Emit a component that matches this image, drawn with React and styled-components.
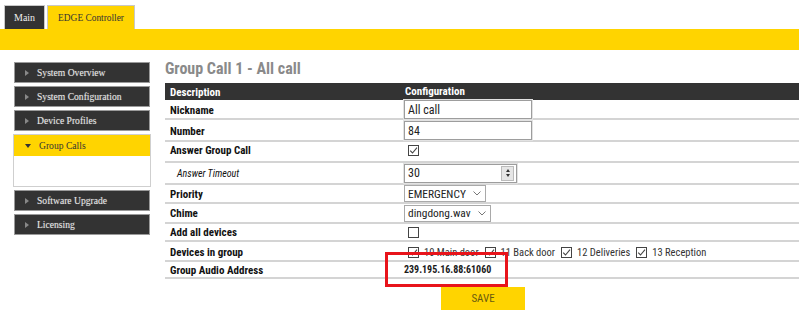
import React from 'react';
import styled, { createGlobalStyle } from 'styled-components';

const Global = createGlobalStyle`
  html, body { margin: 0; padding: 0; background: #fff; overflow: hidden; }
  body { width: 799px; height: 318px; }
`;

const COND = `"Roboto Condensed", "Liberation Sans Narrow", "DejaVu Sans Condensed", Roboto, sans-serif`;
const YELLOW = '#FFD400';

const Page = styled.div`
  width: 799px;
  height: 318px;
  overflow: hidden;
`;

const TabBar = styled.div`
  display: flex;
  gap: 2px;
  padding: 5px 0 0 4px;
  height: 24px;
`;

const Tab = styled.div`
  height: 24px;
  box-sizing: border-box;
  padding: 0 ${p => (p.$active ? 10 : 9)}px;
  display: flex;
  align-items: center;
  font-family: "Liberation Serif", serif;
  font-size: ${p => (p.$active ? 9.4 : 10)}px;
  background: ${p => (p.$active ? YELLOW : '#333')};
  color: ${p => (p.$active ? '#333' : '#eee')};
  border: 1px solid #c8c8c8;
  border-bottom: none;
`;

const Band = styled.div`
  height: 21px;
  background: ${YELLOW};
`;

const Body = styled.div`
  display: flex;
`;

const Sidebar = styled.nav`
  margin: 12px 0 0 14px;
  width: 136px;
  flex-shrink: 0;
  display: flex;
  flex-direction: column;
  gap: 3px;
`;

const NavItem = styled.div`
  height: 21px;
  box-sizing: border-box;
  background: ${p => (p.$open ? YELLOW : '#333')};
  border: 1px solid ${p => (p.$open ? YELLOW : '#9a9a9a')};
  display: flex;
  align-items: center;
  gap: 5px;
  padding-left: 10px;
  font-family: "Liberation Serif", serif;
  font-size: 9.6px;
  color: ${p => (p.$open ? '#333' : '#e6e6e6')};
  text-shadow: ${p => (p.$open ? 'none' : '0 0 1px rgba(255,255,255,0.35)')};
`;

const Arrow = styled.span`
  width: 0;
  height: 0;
  ${p =>
    p.$down
      ? `border-left: 3px solid transparent; border-right: 3px solid transparent; border-top: 4px solid #333;`
      : `border-top: 3px solid transparent; border-bottom: 3px solid transparent; border-left: 4px solid #888;`}
  margin-right: 3px;
`;

const OpenGroup = styled.div`
  border: 1px solid #cfcfcf;
  display: flex;
  flex-direction: column;
  margin: 0 -1px;
`;

const OpenBody = styled.div`
  height: 30px;
  background: #fff;
`;

const Content = styled.main`
  margin-left: 15px;
  width: 640px;
  flex-shrink: 0;
`;

const Title = styled.h1`
  margin: 9px 0 5px 0;
  font-family: ${COND};
  font-weight: 700;
  font-size: 16px;
  line-height: 19px;
  color: #8a8a8a;
`;

const Table = styled.div`
  position: relative;
  width: 640px;
`;

const Row = styled.div`
  display: grid;
  grid-template-columns: 239px 1fr;
  align-items: center;
  height: ${p => p.$h}px;
  padding-top: ${p => p.$pt || 0}px;
  padding-bottom: ${p => p.$pb || 0}px;
  box-sizing: border-box;
  background: ${p => (p.$head ? '#333' : '#fff')};
  border-bottom: ${p => (p.$head ? 'none' : '2px solid #d4d4d4')};
  font-family: ${COND};
  font-size: 11px;
`;

const Label = styled.div`
  padding-left: ${p => (p.$indent ? 12 : 5)}px;
  padding-top: 1px;
  font-weight: ${p => (p.$italic ? 400 : 700)};
  font-style: ${p => (p.$italic ? 'italic' : 'normal')};
  font-size: ${p => (p.$italic ? 10 : 11)}px;
  color: ${p => (p.$head ? '#fff' : '#111')};
`;

const Cell = styled.div`
  display: flex;
  align-items: center;
  gap: 5px;
  padding-left: ${p => p.$pad || 0}px;
  color: ${p => (p.$head ? '#fff' : '#1a1a1a')};
  font-weight: ${p => (p.$bold ? 700 : 400)};
  font-size: ${p => (p.$small ? 10 : 11)}px;
  white-space: nowrap;
`;

const TextInput = styled.div`
  width: ${p => p.$w}px;
  height: 19px;
  box-sizing: border-box;
  border: 1px solid #9d9d9d;
  box-shadow: 0 0 0 1px #e2e2e2;
  display: flex;
  align-items: center;
  justify-content: space-between;
  padding: 0 2px 0 3px;
  font-size: 12px;
  color: #222;
`;

const Spinner = styled.div`
  width: 13px;
  height: 15px;
  background: #e6e6e6;
  border: 1px solid #bbb;
  box-sizing: border-box;
  display: flex;
  flex-direction: column;
  align-items: center;
  justify-content: center;
  gap: 2px;
`;

const Tri = styled.span`
  width: 0;
  height: 0;
  border-left: 2.5px solid transparent;
  border-right: 2.5px solid transparent;
  ${p => (p.$up ? 'border-bottom: 3px solid #333;' : 'border-top: 3px solid #333;')}
`;

const Select = styled.div`
  height: 17px;
  box-sizing: border-box;
  border: 1px solid #a9a9a9;
  display: inline-flex;
  align-items: center;
  gap: 7px;
  padding: 0 4px 0 3px;
  font-size: 11.4px;
  color: #222;
`;

const Box = styled.span`
  width: 11px;
  height: 11px;
  box-sizing: border-box;
  border: 1px solid #444;
  background: #fff;
  display: inline-flex;
  align-items: center;
  justify-content: center;
  flex-shrink: 0;
`;

const DevLabel = styled.span`
  font-size: 10.5px;
  color: #333;
  margin-right: 1px;
`;

const Highlight = styled.div`
  position: absolute;
  left: 220px;
  top: 169px;
  width: 123px;
  height: 35px;
  box-sizing: border-box;
  border: 3px solid #e8141b;
  pointer-events: none;
`;

const SaveButton = styled.button`
  display: flex;
  align-items: center;
  justify-content: center;
  margin: 8px 0 0 276px;
  width: 84px;
  height: 23px;
  border: none;
  background: ${YELLOW};
  font-family: ${COND};
  font-size: 11px;
  color: #6a5b10;
`;

const Check = ({ checked }) => (
  <Box>
    {checked && (
      <svg width="9" height="9" viewBox="0 0 9 9">
        <path d="M1.2 4.6 L3.5 7 L8 1.6" fill="none" stroke="#444" strokeWidth="1.1" />
      </svg>
    )}
  </Box>
);

const Chevron = () => (
  <svg width="8" height="5" viewBox="0 0 8 5">
    <path d="M0.5 0.5 L4 4 L7.5 0.5" fill="none" stroke="#777" strokeWidth="1" />
  </svg>
);

const navTop = ['System Overview', 'System Configuration', 'Device Profiles'];
const navBottom = ['Software Upgrade', 'Licensing'];

export default function App() {
  return (
    <Page>
      <Global />
      <TabBar>
        <Tab>Main</Tab>
        <Tab $active>EDGE Controller</Tab>
      </TabBar>
      <Band />
      <Body>
        <Sidebar>
          {navTop.map(t => (
            <NavItem key={t}>
              <Arrow />
              {t}
            </NavItem>
          ))}
          <OpenGroup>
            <NavItem $open>
              <Arrow $down />
              Group Calls
            </NavItem>
            <OpenBody />
          </OpenGroup>
          {navBottom.map(t => (
            <NavItem key={t}>
              <Arrow />
              {t}
            </NavItem>
          ))}
        </Sidebar>
        <Content>
          <Title>Group Call 1 - All call</Title>
          <Table>
            <Row $head $h={17}>
              <Label $head>Description</Label>
              <Cell $head $bold $pad={1}>Configuration</Cell>
            </Row>
            <Row $h={20}>
              <Label>Nickname</Label>
              <Cell><TextInput $w={128}>All call</TextInput></Cell>
            </Row>
            <Row $h={22} $pt={1}>
              <Label>Number</Label>
              <Cell><TextInput $w={128}>84</TextInput></Cell>
            </Row>
            <Row $h={21} $pb={3}>
              <Label>Answer Group Call</Label>
              <Cell $pad={4}><Check checked /></Cell>
            </Row>
            <Row $h={22}>
              <Label $indent $italic>Answer Timeout</Label>
              <Cell>
                <TextInput $w={113}>
                  30
                  <Spinner><Tri $up /><Tri /></Spinner>
                </TextInput>
              </Cell>
            </Row>
            <Row $h={19}>
              <Label>Priority</Label>
              <Cell><Select>EMERGENCY<Chevron /></Select></Cell>
            </Row>
            <Row $h={20}>
              <Label>Chime</Label>
              <Cell><Select>dingdong.wav<Chevron /></Select></Cell>
            </Row>
            <Row $h={18}>
              <Label>Add all devices</Label>
              <Cell $pad={4}><Check /></Cell>
            </Row>
            <Row $h={20} $pt={2}>
              <Label>Devices in group</Label>
              <Cell $pad={4}>
                <Check checked /><DevLabel>10 Main door</DevLabel>
                <Check checked /><DevLabel>11 Back door</DevLabel>
                <Check checked /><DevLabel>12 Deliveries</DevLabel>
                <Check checked /><DevLabel>13 Reception</DevLabel>
              </Cell>
            </Row>
            <Row $h={17}>
              <Label>Group Audio Address</Label>
              <Cell $bold $small>239.195.16.88:61060</Cell>
            </Row>
            <Highlight />
          </Table>
          <SaveButton>SAVE</SaveButton>
        </Content>
      </Body>
    </Page>
  );
}
